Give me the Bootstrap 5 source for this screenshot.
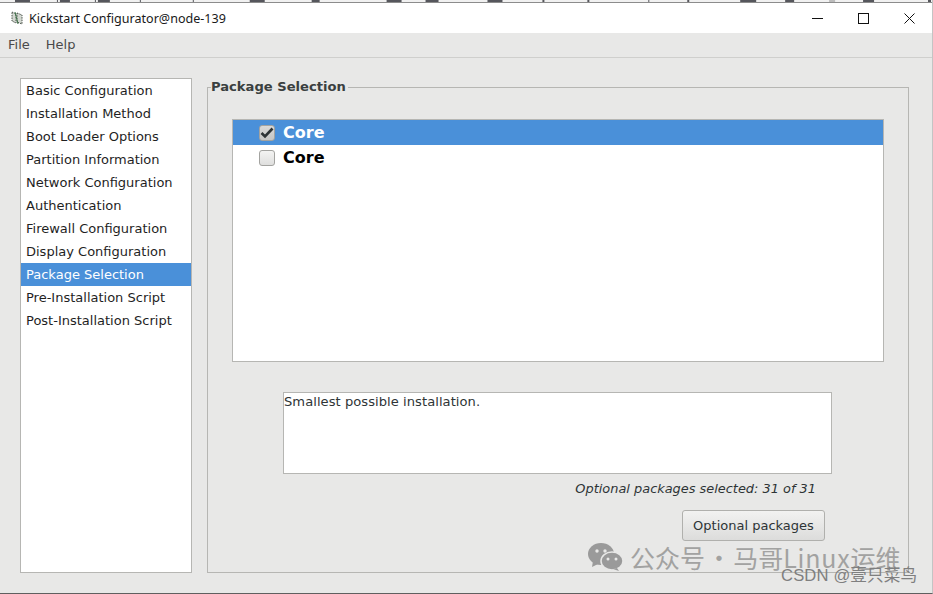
<!DOCTYPE html>
<html lang="zh"><head><meta charset="utf-8"><title>Kickstart Configurator</title>
<link href="https://cdn.jsdelivr.net/npm/bootstrap@5.3.0/dist/css/bootstrap.min.css" rel="stylesheet">
<style>
html,body{height:100%;margin:0;overflow:hidden}
body{background:#e8e8e7;font-family:"DejaVu Sans",sans-serif;font-size:13px;color:#2e3436;line-height:23px}
.win{width:933px;height:594px;position:relative;display:flex;flex-direction:column;border-right:1px solid #c4c4c4;border-bottom:1px solid #5f5f5f}
.topstrip{height:3px;flex:none;display:block;width:100%}
.titlebar{height:30px;background:#fff;flex:none;color:#1a1a1a;font-family:"Noto Sans",sans-serif;font-size:12.55px;padding-left:10px}
.appico{width:14px;height:16px;margin-right:5px}
.winbtn{width:46px;height:30px;display:flex;align-items:center;justify-content:center}
.menubar{height:25px;flex:none;border-bottom:1px solid #cfcfcd;padding-left:8px;gap:16px;color:#4a4a4a;line-height:24px}
.bodyarea{flex:1;padding:20px 23px 20px 20px;gap:15px;min-height:0}
.sidelist{width:172px;flex:none;background:#fff;border:1px solid #b6b6b3}
.sideitem{height:23px;padding-left:5px;color:#1f1f1f;white-space:nowrap}
.sideitem.sel{background:#4a90d9;color:#fff}
.groupbox{flex:1;position:relative;border:1px solid #b6b6b3;margin-top:9px;padding:31px 24px 0 24px;min-width:0}
.grouplabel{position:absolute;left:3px;top:-10px;background:#e8e8e7;padding-right:2px;font-weight:700;color:#3a3f40;line-height:18px;font-size:13.1px}
.pkglist{height:243px;background:#fff;border:1px solid #b6b6b3}
.pkgrow{height:25px;padding-left:26px;gap:8px;font-weight:700;font-size:16px;color:#000}
.pkgrow.sel{background:#4a90d9;color:#fff}
.chk{width:16px;height:16px;border:1px solid #a3a3a0;border-radius:3px;background:linear-gradient(#f4f4f3,#dfdfde);display:flex;align-items:center;justify-content:center}
.chk.on{background:linear-gradient(#d9d9d8,#c6c6c5)}
.desc{height:82px;width:549px;margin:30px 0 0 51px;background:#fff;border:1px solid #b6b6b3;line-height:18px;color:#2e3436;font-size:13.08px;letter-spacing:.05px}
.selinfo{margin:7px 68px 0 0;text-align:right;font-style:italic;line-height:16px;font-size:12.92px}
.optbtn{width:143px;height:31px;margin:13px 59px 0 auto;display:block;padding:0;font-size:13px;color:#2e3436;border:1px solid #b0b0ad;border-radius:3px;background:linear-gradient(#f2f2f1,#dcdcdb)}
.wm{position:absolute;white-space:nowrap;font-family:"Noto Sans CJK SC",sans-serif}
.wm1{left:588px;top:541px;font-size:25px;line-height:32px;display:flex;align-items:center;gap:7px;color:#a2a2a1;word-spacing:-4px}
.wm1b{letter-spacing:.8px}
.wm2{left:781px;top:566px;font-size:16.6px;line-height:20px;color:#7f7f7f;letter-spacing:.15px;font-family:"Liberation Sans","Noto Sans CJK SC",sans-serif}
</style></head><body>
<div class="win">
<svg class="topstrip" viewBox="0 0 933 3" preserveAspectRatio="none"><rect width="933" height="3" fill="#f1f1f1"/><rect y="2" width="933" height="1" fill="#8c8c8c"/><g fill="#55565c"><rect x="15" width="15" height="2"/><rect x="57" width="1" height="2"/><rect x="60" width="10" height="2"/><rect x="95" width="1" height="2"/><rect x="98" width="12" height="2"/><rect x="140" width="1" height="2"/><rect x="193" width="1" height="2"/><rect x="250" width="15" height="2"/><rect x="312" width="8" height="2"/><rect x="387" width="15" height="2"/><rect x="426" width="13" height="2"/><rect x="488" width="15" height="2"/><rect x="543" width="2" height="2"/><rect x="588" width="2" height="2"/><rect x="649" width="1" height="2"/><rect x="688" width="2" height="2"/><rect x="741" width="16" height="2"/><rect x="786" width="9" height="2"/><rect x="864" width="11" height="2"/><rect x="929" width="3" height="2"/></g><rect x="830" width="6" height="2" fill="#bcbcbc"/></svg>
<div class="titlebar d-flex align-items-center">
<svg class="appico" viewBox="0 0 14 16"><path d="M2 2l4 2v9L2 11zM7 3l5 2v9l-5-2z" fill="#d3d8d1" stroke="#4a524a" stroke-width="1" stroke-dasharray="1.5 1"/><path d="M5 2l3 12" stroke="#3c7246" stroke-width="1"/></svg>
<span>Kickstart Configurator@node-139</span>
<div class="d-flex ms-auto">
<div class="winbtn"><svg width="11" height="11" viewBox="0 0 11 11"><path d="M0 5.5h11" stroke="#111" fill="none"/></svg></div>
<div class="winbtn"><svg width="11" height="11" viewBox="0 0 11 11"><rect x=".5" y=".5" width="10" height="10" stroke="#111" fill="none"/></svg></div>
<div class="winbtn"><svg width="11" height="11" viewBox="0 0 11 11"><path d="M.5.5l10 10M10.5.5l-10 10" stroke="#111" fill="none"/></svg></div>
</div></div>
<div class="menubar d-flex align-items-center"><span>File</span><span>Help</span></div>
<div class="bodyarea d-flex">
<div class="sidelist">
<div class="sideitem">Basic Configuration</div>
<div class="sideitem">Installation Method</div>
<div class="sideitem">Boot Loader Options</div>
<div class="sideitem">Partition Information</div>
<div class="sideitem">Network Configuration</div>
<div class="sideitem">Authentication</div>
<div class="sideitem">Firewall Configuration</div>
<div class="sideitem">Display Configuration</div>
<div class="sideitem sel">Package Selection</div>
<div class="sideitem">Pre-Installation Script</div>
<div class="sideitem">Post-Installation Script</div>
</div>
<div class="groupbox">
<div class="grouplabel">Package Selection</div>
<div class="pkglist">
<div class="pkgrow sel d-flex align-items-center"><span class="chk on"><svg width="14" height="12" viewBox="0 0 14 12"><path d="M1.5 6l3.5 3.5 7.5-8" stroke="#2e3436" stroke-width="2.6" fill="none"/></svg></span><span>Core</span></div>
<div class="pkgrow d-flex align-items-center"><span class="chk"></span><span>Core</span></div>
</div>
<div class="desc">Smallest possible installation.</div>
<div class="selinfo">Optional packages selected: 31 of 31</div>
<button class="optbtn" type="button">Optional packages</button>
</div>
</div>
<div class="wm wm1"><svg width="35" height="28" viewBox="0 0 35 28"><ellipse cx="13" cy="11" rx="13" ry="11" fill="#9a9a9a"/><path d="M5 18l-1 6 6-3z" fill="#9a9a9a"/><ellipse cx="24" cy="18" rx="11" ry="9" fill="#9a9a9a" stroke="#e8e8e7" stroke-width="1.5"/><path d="M29 25l2 3-6-2z" fill="#9a9a9a"/><circle cx="9" cy="8" r="1.7" fill="#e8e8e7"/><circle cx="17" cy="8" r="1.7" fill="#e8e8e7"/><circle cx="20" cy="16" r="1.5" fill="#e8e8e7"/><circle cx="28" cy="16" r="1.5" fill="#e8e8e7"/></svg><span>公众号 · 马哥<span class="wm1b">Linux</span>运维</span></div>
<div class="wm wm2">CSDN @壹只菜鸟</div>
</div>
<script src="https://cdn.jsdelivr.net/npm/bootstrap@5.3.0/dist/js/bootstrap.bundle.min.js"></script>
</body></html>
